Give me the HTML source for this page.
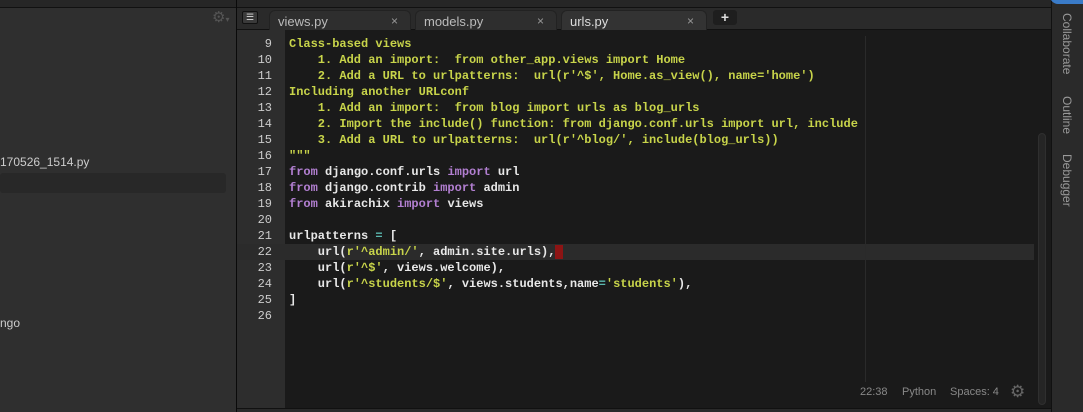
<!DOCTYPE html>
<html><head><meta charset="utf-8"><style>
*{margin:0;padding:0;box-sizing:border-box}
body{width:1083px;height:412px;overflow:hidden;background:#1a1a1a;font-family:"Liberation Sans",sans-serif;position:relative}
#top{position:absolute;left:0;top:0;width:1083px;height:8px;background:#262626;border-bottom:1px solid #111}
#side{position:absolute;left:0;top:8px;width:236px;height:404px;background:#2f2f2f;color:#ccc;font-size:12px}
#vsep{position:absolute;left:236px;top:0;width:1px;height:412px;background:#0a0a0a}
#tabs{position:absolute;left:237px;top:8px;width:814px;height:22px;background:#2a2a2a;border-bottom:1px solid #111}
.tab{position:absolute;top:2px;height:20px;background:#2e2e2e;border-radius:6px 6px 0 0;color:#bbb;font-size:13px;padding:3px 0 0 40px;border:1px solid #222;border-bottom:none}
.tab span{position:absolute;right:12px;top:3px;font-size:12px;color:#999}
#gutter{position:absolute;left:237px;top:30px;width:48px;height:378px;background:#2d2d2d}
#code{position:absolute;left:285px;top:30px;width:766px;height:378px;background:#1a1a1a}
.ln{position:absolute;font-family:"Liberation Mono",monospace;font-size:12px;line-height:16px;white-space:pre}
#nums{left:237px;top:36px;width:35px;text-align:right;color:#ccc}
#src{left:289px;top:36px;color:#e8e8e8;font-weight:bold}
.y{color:#c8d44a}.p{color:#b27fd1}.c{color:#5bb8b0}
#hl{position:absolute;left:237px;top:244px;width:797px;height:16px;background:#2b2b2b}
#cur{position:absolute;left:555px;top:245px;width:8px;height:14px;background:#8d1414}
#guide{position:absolute;left:865px;top:36px;width:1px;height:346px;background:#2a2a2a}
#sb{position:absolute;left:1038px;top:133px;width:8px;height:272px;border-radius:4px;background:#252525;border:1px solid #2f2f2f}
#status{position:absolute;top:386px;font-size:11px;color:#888}
#right{position:absolute;left:1051px;top:0;width:32px;height:412px;background:#2a2a2a;border-left:1px solid #111}
.vt{position:absolute;left:8px;writing-mode:vertical-rl;font-size:12px;color:#999}
#bot{position:absolute;left:237px;top:408px;width:814px;height:4px;background:#2a2a2a;border-top:1px solid #111}
</style></head><body>
<div id="top"></div>
<div id="side">
<div style="position:absolute;left:212px;top:0;color:#555;font-size:15px">⚙<span style="font-size:8px">▾</span></div>
<div style="position:absolute;left:0;top:147px">170526_1514.py</div>
<div style="position:absolute;left:0;top:165px;width:226px;height:20px;background:#282828;border-radius:3px"></div>
<div style="position:absolute;left:0;top:308px">ngo</div>
</div>
<div id="vsep"></div>
<div id="tabs">
<div style="position:absolute;left:5px;top:3px;width:16px;height:13px;background:#3a3a3a;border:1px solid #111;border-radius:2px;color:#ddd;font-size:9px;text-align:center;line-height:11px">☰</div>
<div class="tab" style="left:32px;width:142px;padding-left:8px">views.py<span>×</span></div>
<div class="tab" style="left:178px;width:142px;padding-left:8px">models.py<span>×</span></div>
<div class="tab" style="left:324px;width:146px;padding-left:8px;background:#333;color:#ddd">urls.py<span>×</span></div>
<div style="position:absolute;left:476px;top:2px;width:24px;height:15px;background:#1e1e1e;border-radius:3px;color:#ddd;text-align:center;font-size:14px;line-height:14px;font-weight:bold">+</div>
</div>
<div id="gutter"></div>
<div id="code"></div>
<div id="hl"></div>
<div id="guide"></div>
<div id="cur"></div>
<div class="ln" id="nums">9
10
11
12
13
14
15
16
17
18
19
20
21
22
23
24
25
26</div>
<div class="ln" id="src"><span class="y">Class-based views
    1. Add an import:  from other_app.views import Home
    2. Add a URL to urlpatterns:  url(r'^$', Home.as_view(), name='home')
Including another URLconf
    1. Add an import:  from blog import urls as blog_urls
    2. Import the include() function: from django.conf.urls import url, include
    3. Add a URL to urlpatterns:  url(r'^blog/', include(blog_urls))
"""</span>
<span class="p">from</span> django.conf.urls <span class="p">import</span> url
<span class="p">from</span> django.contrib <span class="p">import</span> admin
<span class="p">from</span> akirachix <span class="p">import</span> views

urlpatterns <span class="c">=</span> [
    url(<span class="y">r'^admin/'</span>, admin.site.urls),
    url(<span class="y">r'^$'</span>, views.welcome),
    url(<span class="y">r'^students/$'</span>, views.students,name<span class="c">=</span><span class="y">'students'</span>),
]
</div>
<div id="sb"></div>
<div id="status" style="left:860px">22:38</div>
<div id="status" style="left:902px">Python</div>
<div id="status" style="left:950px">Spaces: 4</div>
<div style="position:absolute;left:1010px;top:382px;color:#666;font-size:17px">⚙</div>
<div id="bot"></div>
<div id="right">
<div style="position:absolute;left:-2px;top:-6px;width:38px;height:10px;background:#3a7bc8;border-radius:0 0 0 8px"></div>
<div class="vt" style="top:13px">Collaborate</div>
<div class="vt" style="top:96px">Outline</div>
<div class="vt" style="top:154px">Debugger</div>
</div>
</body></html>
